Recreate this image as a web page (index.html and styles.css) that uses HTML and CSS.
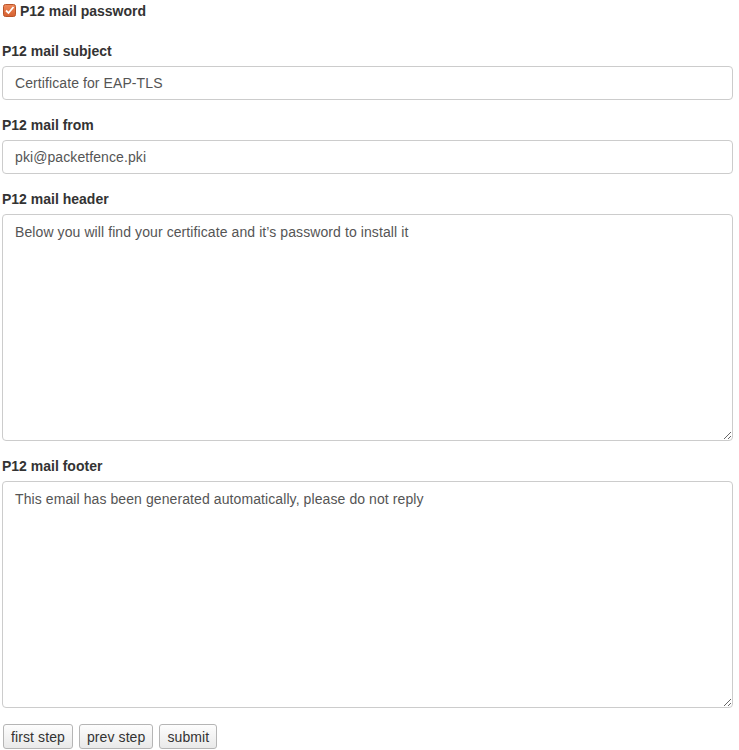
FILE: index.html
```html
<!DOCTYPE html>
<html>
<head>
<meta charset="utf-8">
<link rel="stylesheet" href="styles.css">
</head>
<body>
<form class="form">
  <div class="check-row">
    <span class="checkbox"><svg width="13" height="13" viewBox="0 0 13 13"><defs><linearGradient id="cg" x1="0" y1="0" x2="0" y2="1"><stop offset="0" stop-color="#ee8a5c"/><stop offset="1" stop-color="#d6602f"/></linearGradient></defs><rect x="0.5" y="0.5" width="12" height="12" rx="2" fill="url(#cg)" stroke="#b9542a"/><path d="M3 6.5 L5.5 9 L10.5 3" fill="none" stroke="#fff" stroke-width="1.8"/></svg></span>
    <span class="check-label">P12 mail password</span>
  </div>
  <div class="field">
    <label class="label">P12 mail subject</label>
    <input class="input" type="text" value="Certificate for EAP-TLS">
  </div>
  <div class="field">
    <label class="label">P12 mail from</label>
    <input class="input" type="text" value="pki@packetfence.pki">
  </div>
  <div class="field">
    <label class="label">P12 mail header</label>
    <textarea class="textarea">Below you will find your certificate and it’s password to install it</textarea>
  </div>
  <div class="field">
    <label class="label">P12 mail footer</label>
    <textarea class="textarea">This email has been generated automatically, please do not reply</textarea>
  </div>
  <div class="buttons">
    <button type="button" class="btn">first step</button>
    <button type="button" class="btn">prev step</button>
    <button type="button" class="btn">submit</button>
  </div>
</form>
</body>
</html>
```
FILE: styles.css
```css
html, body {
  margin: 0;
  padding: 0;
  background: #fff;
}
body {
  padding: 0 2px;
  font-family: "Liberation Sans", Arial, sans-serif;
  font-size: 14px;
  color: #333;
}
.form {
  display: flex;
  flex-direction: column;
}
.check-row {
  display: flex;
  align-items: center;
  height: 22px;
  margin-bottom: 18px;
  padding-left: 1px;
}
.checkbox {
  display: flex;
  width: 13px;
  height: 13px;
  margin-right: 4px;
  margin-top: -1px;
}
.check-label, .label {
  font-weight: bold;
  font-size: 14px;
  color: #333;
}
.field {
  display: flex;
  flex-direction: column;
  margin-bottom: 14px;
}
.label {
  display: block;
  line-height: 18px;
  padding-top: 2px;
  margin-bottom: 6px;
}
.input, .textarea {
  box-sizing: border-box;
  width: 731px;
  border: 1px solid #ccc;
  border-radius: 4px;
  font-family: "Liberation Sans", Arial, sans-serif;
  font-size: 14px;
  letter-spacing: 0.09px;
  color: #555;
  margin: 0;
  background: #fff;
}
.input {
  height: 34px;
  padding: 0 12px;
}
.textarea {
  height: 227px;
  padding: 7px 12px;
  line-height: 20px;
  resize: vertical;
}
.buttons {
  display: flex;
  gap: 6px;
  margin-top: 2px;
  padding-left: 1px;
}
.btn {
  height: 25px;
  padding: 0 7px;
  font-family: "Liberation Sans", Arial, sans-serif;
  font-size: 14px;
  letter-spacing: 0.1px;
  color: #333;
  background: linear-gradient(#fdfdfd, #e9e9e9);
  border: 1px solid #b5b5b5;
  border-radius: 3px;
}
```
